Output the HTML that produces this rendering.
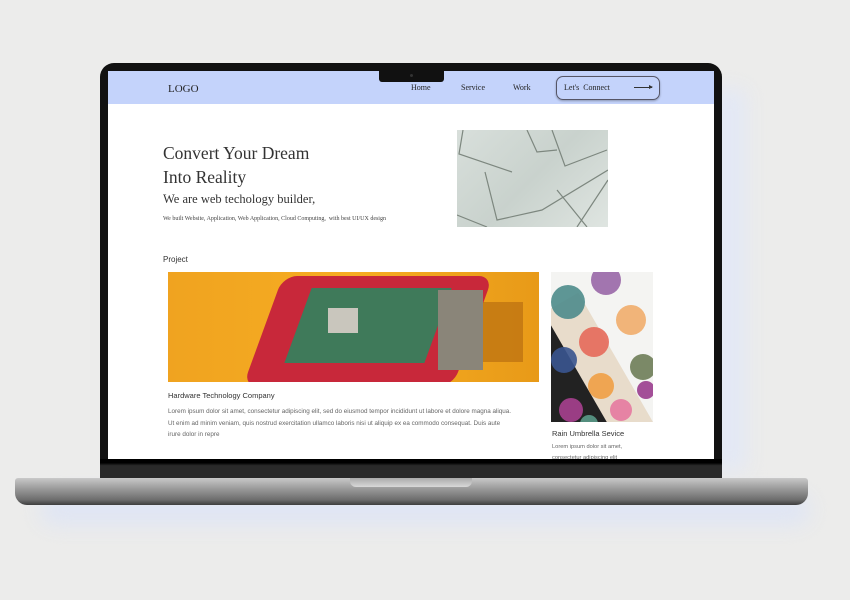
<!DOCTYPE html>
<html><head><style>
*{margin:0;padding:0;box-sizing:border-box}
body{width:850px;height:600px;overflow:hidden;background:#ececeb;font-family:"Liberation Sans",sans-serif;position:relative}
.a{position:absolute}
.serif{font-family:"Liberation Serif",serif}
</style></head><body>
<div class="a" style="left:40px;top:495px;width:770px;height:30px;background:#dfe5f4;filter:blur(10px);border-radius:20px"></div>
<div class="a" style="left:715px;top:90px;width:30px;height:380px;background:#e2e8f6;filter:blur(10px)"></div>
<!-- laptop lid -->
<div class="a" style="left:100px;top:63px;width:622px;height:412px;background:#111;border-radius:14px 14px 0 0"></div>
<div class="a" style="left:108px;top:71px;width:606px;height:388px;background:#fff;overflow:hidden">
  <div class="a" style="left:0;top:0;width:606px;height:33px;background:#c4d3fb"></div>
  <div class="a serif" style="left:60px;top:12px;font-size:11px;color:#222">LOGO</div>
  <div class="a serif" style="left:303px;top:12px;font-size:8px;color:#222">Home</div>
  <div class="a serif" style="left:353px;top:12px;font-size:8px;color:#222">Service</div>
  <div class="a serif" style="left:405px;top:12px;font-size:8px;color:#222">Work</div>
  <div class="a" style="left:448px;top:5px;width:104px;height:24px;border:1px solid #556;border-radius:7px;box-shadow:0 1px 2px rgba(0,0,0,.3)"></div>
  <div class="a serif" style="left:456px;top:12px;font-size:8px;color:#222">Let's&nbsp; Connect</div>
  <div class="a" style="left:526px;top:16px;width:18px;height:1px;background:#333"></div>
  <div class="a" style="left:541px;top:14px;width:0;height:0;border-left:4px solid #333;border-top:2px solid transparent;border-bottom:2px solid transparent"></div>
  <div class="a serif" style="left:55px;top:72px;font-size:17.5px;color:#333">Convert Your Dream</div>
  <div class="a serif" style="left:55px;top:96px;font-size:17.5px;color:#333">Into Reality</div>
  <div class="a serif" style="left:55px;top:121px;font-size:12.5px;color:#333">We are web techology builder,</div>
  <div class="a serif" style="left:55px;top:145px;font-size:6px;color:#444">We built Website, Application, Web Application, Cloud Computing,&nbsp; with best UI/UX design</div>
  <div class="a" style="left:349px;top:59px;width:151px;height:97px;background:linear-gradient(135deg,#d8dfdb,#c9d2cd 50%,#dfe5e1);overflow:hidden">
    <svg width="151" height="97"><g fill="none" stroke="#7d877f" stroke-width="1.2"><path d="M6 0 L2 24 L55 42"/><path d="M70 0 L80 22 L100 20"/><path d="M95 0 L108 36 L150 20"/><path d="M28 42 L40 90 L85 80 L151 40"/><path d="M100 60 L130 97"/><path d="M120 97 L151 50"/><path d="M0 85 L30 97"/></g></svg>
  </div>
  <div class="a" style="left:55px;top:184px;font-size:8px;color:#333">Project</div>
  <div class="a" style="left:60px;top:201px;width:371px;height:110px;background:linear-gradient(90deg,#f0a320,#f6ad22 50%,#e89a18);overflow:hidden">
    <div class="a" style="left:95px;top:4px;width:210px;height:110px;background:#c8283a;border-radius:14px;transform:skewX(-20deg)"></div>
    <div class="a" style="left:130px;top:16px;width:140px;height:75px;background:#3f7a5a;transform:skewX(-20deg)"></div>
    <div class="a" style="left:160px;top:36px;width:30px;height:25px;background:#c9c6bd"></div>
    <div class="a" style="left:270px;top:18px;width:45px;height:80px;background:#8a8579"></div>
    <div class="a" style="left:315px;top:30px;width:40px;height:60px;background:#b0680f;opacity:.6"></div>
  </div>
  <div class="a" style="left:60px;top:320px;font-size:7.5px;color:#333">Hardware Technology Company</div>
  <div class="a" style="left:60px;top:335px;width:345px;font-size:6.3px;line-height:11.5px;color:#666">Lorem ipsum dolor sit amet, consectetur adipiscing elit, sed do eiusmod tempor incididunt ut labore et dolore magna aliqua. Ut enim ad minim veniam, quis nostrud exercitation ullamco laboris nisi ut aliquip ex ea commodo consequat. Duis aute irure dolor in repre</div>
  <div class="a" style="left:443px;top:201px;width:102px;height:150px;background:#f4f4f2;overflow:hidden">
    <div class="a" style="left:-20px;top:40px;width:60px;height:130px;background:#222;transform:rotate(-20deg)"></div>
    <div class="a" style="left:30px;top:20px;width:40px;height:160px;background:#e8dccb;transform:rotate(-30deg)"></div>
    <svg class="a" style="left:0;top:0" width="102" height="150"><g opacity=".9">
    <circle cx="55" cy="8" r="15" fill="#9a68a8"/><circle cx="17" cy="30" r="17" fill="#4e8c8c"/><circle cx="80" cy="48" r="15" fill="#f1ae6c"/><circle cx="43" cy="70" r="15" fill="#e66a5a"/><circle cx="13" cy="88" r="13" fill="#3a5590"/><circle cx="92" cy="95" r="13" fill="#6e7e58"/><circle cx="50" cy="114" r="13" fill="#f0a045"/><circle cx="95" cy="118" r="9" fill="#9a3d8e"/><circle cx="20" cy="138" r="12" fill="#a8418f"/><circle cx="70" cy="138" r="11" fill="#e67aa0"/><circle cx="38" cy="152" r="9" fill="#5a9a88"/></g></svg>
  </div>
  <div class="a" style="left:444px;top:358px;font-size:7.5px;color:#333">Rain Umbrella Sevice</div>
  <div class="a" style="left:444px;top:373px;font-size:5.7px;color:#666">Lorem ipsum dolor sit amet,</div>
  <div class="a" style="left:444px;top:384px;font-size:5.7px;color:#666">consectetur adipiscing elit</div>
  <div class="a" style="left:271px;top:0;width:65px;height:11px;background:#111;border-radius:0 0 3px 3px"></div>
  <div class="a" style="left:302px;top:3px;width:3px;height:3px;background:#333;border-radius:50%"></div>
</div>
<!-- hinge -->
<div class="a" style="left:100px;top:459px;width:622px;height:19px;background:linear-gradient(#000,#000 20%,#2a2a2a 35%,#2a2a2a)"></div>
<!-- base -->
<div class="a" style="left:15px;top:478px;width:793px;height:27px;background:linear-gradient(#c9c9c9,#9a9a9a 40%,#6e6e6e 80%,#3e3e3e);border-radius:3px 3px 12px 12px"></div>
<div class="a" style="left:350px;top:478px;width:122px;height:9px;background:linear-gradient(#aaa,#d8d8d8);border-radius:0 0 6px 6px"></div>
</body></html>
